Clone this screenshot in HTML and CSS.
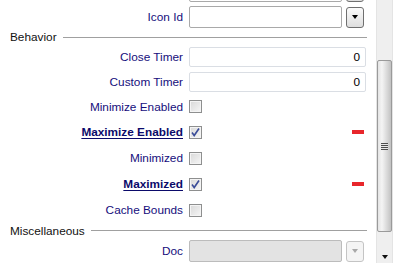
FILE: index.html
```
<!doctype html>
<html lang="en">
<head>
	<meta charset="utf-8">
	<title>Property Grid</title>
	<link rel="stylesheet" href="styles.css">
</head>
<body>
	<div class="panel">
		<div class="props">
			<div class="row row-top">
				<span class="label"></span>
				<div class="value">
					<div class="field field-dark"></div>
					<div class="drop"><span class="tri"></span></div>
				</div>
			</div>
			<div class="row row-std">
				<span class="label">Icon Id</span>
				<div class="value">
					<div class="field field-dark"></div>
					<div class="drop"><span class="tri"></span></div>
				</div>
			</div>

			<div class="group group-behavior"><span>Behavior</span><hr></div>

			<div class="row row-std">
				<span class="label">Close Timer</span>
				<div class="value"><div class="field num">0</div></div>
			</div>
			<div class="row row-short">
				<span class="label">Custom Timer</span>
				<div class="value"><div class="field num">0</div></div>
			</div>
			<div class="row row-check first">
				<span class="label">Minimize Enabled</span>
				<div class="value"><span class="check"></span></div>
			</div>
			<div class="row row-check">
				<span class="label changed">Maximize Enabled</span>
				<div class="value">
					<span class="check on">
						<svg width="11" height="11" viewBox="0 0 11 11"><path d="M2 5.5 L4.2 8.5 L9 1.5" fill="none" stroke="#3a4c98" stroke-width="1.6"/></svg>
					</span>
					<span class="dash"></span>
				</div>
			</div>
			<div class="row row-check">
				<span class="label">Minimized</span>
				<div class="value"><span class="check"></span></div>
			</div>
			<div class="row row-check">
				<span class="label changed">Maximized</span>
				<div class="value">
					<span class="check on">
						<svg width="11" height="11" viewBox="0 0 11 11"><path d="M2 5.5 L4.2 8.5 L9 1.5" fill="none" stroke="#3a4c98" stroke-width="1.6"/></svg>
					</span>
					<span class="dash"></span>
				</div>
			</div>
			<div class="row row-check">
				<span class="label">Cache Bounds</span>
				<div class="value"><span class="check"></span></div>
			</div>

			<div class="group group-misc"><span>Miscellaneous</span><hr></div>

			<div class="row row-std">
				<span class="label">Doc</span>
				<div class="value">
					<div class="field field-off"></div>
					<div class="drop drop-off"><span class="tri"></span></div>
				</div>
			</div>
		</div>

		<div class="scrollbar">
			<div class="thumb"><span class="grip"></span></div>
			<span class="arrow"></span>
		</div>
	</div>
</body>
</html>
```

FILE: styles.css
```
html, body {
	margin: 0;
	padding: 0;
	background: #fff;
	overflow: hidden;
}
body {
	font-family: "Liberation Sans", Arial, sans-serif;
	font-size: 11.8px;
	color: #111;
}

/*****/

.panel {
	display: flex;
	align-items: flex-start;
	height: 270px;
}
.props {
	width: 375px;
	display: flex;
	flex-direction: column;
}
.row {
	display: flex;
	align-items: center;
	column-gap: 6px;
}
.row-top { height: 26px; margin-top: -22px; }
.row-std { height: 26px; }
.row-short { height: 24px; }
.row-check { height: 26px; }
.row-check.first { height: 25px; }

.label {
	width: 183px;
	flex: none;
	text-align: right;
	color: #150e7c;
	white-space: nowrap;
}
.label.changed {
	font-weight: bold;
	color: #0b0a6a;
	text-decoration: underline;
	text-underline-offset: 2px;
}
.value {
	width: 177px;
	flex: none;
	display: flex;
	align-items: center;
	column-gap: 4px;
}

.field {
	box-sizing: border-box;
	flex: 1;
	height: 20px;
	border: 1px solid #dadee4;
	border-radius: 2px;
	background: #fff;
}
.field.num {
	text-align: right;
	padding-right: 5px;
	line-height: 18px;
	color: #000;
}
.field-dark {
	height: 22px;
	border-color: #a9a9a9;
}
.field-off {
	height: 22px;
	border-color: #bcbcbc;
	background: #e3e3e3;
}

.drop {
	box-sizing: border-box;
	width: 18px;
	height: 21px;
	margin-right: 2px;
	flex: none;
	border: 1px solid #6f6f6f;
	border-radius: 3px;
	background: linear-gradient(#fbfbfb, #dedede);
	display: flex;
	align-items: center;
	justify-content: center;
}
.tri {
	width: 0;
	height: 0;
	border-left: 3.5px solid transparent;
	border-right: 3.5px solid transparent;
	border-top: 4px solid #000;
}
.drop-off {
	border-color: #c4c4c4;
	background: #f4f4f4;
}
.drop-off .tri {
	border-top-color: #a8a8a8;
}

.check {
	box-sizing: border-box;
	width: 13px;
	height: 13px;
	flex: none;
	border: 1px solid #8e8f8f;
	background: linear-gradient(135deg, #d8d8d8, #f6f6f6);
	box-shadow: inset 0 0 0 1px #f4f4f4;
	display: flex;
	align-items: center;
	justify-content: center;
}
.check svg {
	display: block;
}
.dash {
	width: 12px;
	height: 4px;
	margin-left: auto;
	margin-right: 2px;
	background: #e8262b;
}

.group {
	display: flex;
	align-items: center;
	padding-left: 10px;
	width: 357px;
}
.group-behavior { height: 14px; }
.group-misc { height: 15px; }
.group hr {
	flex: 1;
	margin: 0 0 0 6px;
	border: 0;
	border-top: 1px solid #a0a0a0;
}

.scrollbar {
	box-sizing: border-box;
	width: 17px;
	height: 263px;
	margin-left: 1px;
	background: #efefef;
	border-left: 1px solid #e4e4e4;
	border-right: 1px solid #e4e4e4;
	display: flex;
	flex-direction: column;
	align-items: center;
}
.thumb {
	box-sizing: border-box;
	width: 15px;
	height: 172px;
	margin-top: 60px;
	border: 1px solid #9a9a9a;
	border-radius: 2px;
	background: linear-gradient(90deg, #e4e4e4 0%, #f4f4f4 30%, #d8d8d8 70%, #c2c2c2 100%);
	display: flex;
	align-items: center;
	justify-content: center;
}
.grip {
	width: 7px;
	height: 7px;
	background: repeating-linear-gradient(#4e4e4e 0, #4e4e4e 1px, #e8e8e8 1px, #e8e8e8 2px);
}
.arrow {
	margin-top: 23px;
	width: 0;
	height: 0;
	border-left: 3.5px solid transparent;
	border-right: 3.5px solid transparent;
	border-top: 4px solid #111;
}
```
